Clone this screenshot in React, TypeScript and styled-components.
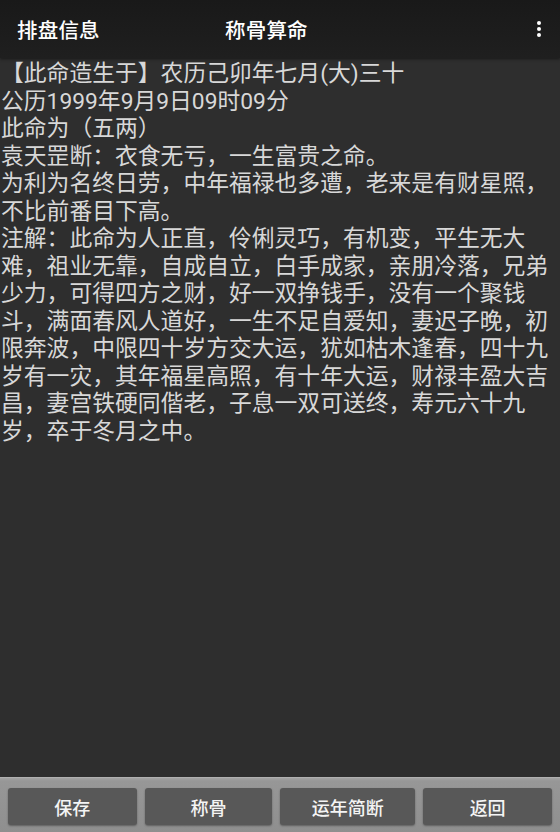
import React from "react";
import styled, { createGlobalStyle } from "styled-components";

const Global = createGlobalStyle`
  html, body { margin: 0; padding: 0; background: #2e2e2e; }
  body { font-family: Roboto, "Noto Sans CJK SC", sans-serif; }
  * { box-sizing: border-box; }
`;

const Screen = styled.div`
  width: 560px;
  height: 832px;
  display: flex;
  flex-direction: column;
  background: #2e2e2e;
  overflow: hidden;
`;

const Header = styled.header`
  height: 58px;
  flex: 0 0 58px;
  display: flex;
  align-items: center;
  padding: 0 17px 0 17px;
  background: linear-gradient(#191919, #1f1f1f);
  color: #ffffff;
  font-family: Roboto, "Noto Sans CJK SC", sans-serif;
  font-size: 20.5px;
  font-weight: 500;
  box-shadow: 0 1px 3px rgba(0, 0, 0, 0.5);
  position: relative;
  z-index: 1;
`;

const LeftTitle = styled.div`
  width: 208px;
  letter-spacing: 0.2px;
`;

const CenterTitle = styled.div`
  flex: 1;
  letter-spacing: 0.2px;
`;

const MenuButton = styled.div`
  width: 24px;
  height: 30px;
  display: flex;
  flex-direction: column;
  align-items: center;
  justify-content: center;
  gap: 2px;
  margin-right: -8px;
`;

const Dot = styled.span`
  width: 4px;
  height: 4px;
  border-radius: 50%;
  background: #ffffff;
`;

const Content = styled.main`
  flex: 1;
  padding: 2px 0 0 1px;
  color: #d8d8d8;
  font-family: Roboto, "Noto Sans CJK SC", sans-serif;
  font-size: 22.8px;
  line-height: 27.5px;
  overflow: hidden;
`;

const Line = styled.div`
  white-space: nowrap;
  height: 27.5px;
`;

const BottomBar = styled.footer`
  flex: 0 0 55px;
  display: grid;
  grid-template-columns: 128fr 127fr 134fr 128fr;
  gap: 8px;
  padding: 10px 8px 7px 8px;
  background: linear-gradient(#a3a3a3 0px, #979797 3px, #8f8f8f 100%);
  border-top: 1px solid #b0b0b0;
`;

const ActionButton = styled.button`
  border: none;
  border-radius: 3px;
  background: #585858;
  color: #f4f4f4;
  font-family: Roboto, "Noto Sans CJK SC", sans-serif;
  font-size: 18px;
  font-weight: 500;
  padding: 0;
  box-shadow: 0 1px 2px rgba(0, 0, 0, 0.35);
  display: flex;
  align-items: center;
  justify-content: center;
`;

const lines = [
  "【此命造生于】农历己卯年七月(大)三十",
  "公历1999年9月9日09时09分",
  "此命为（五两）",
  "袁天罡断：衣食无亏，一生富贵之命。",
  "为利为名终日劳，中年福禄也多遭，老来是有财星照，",
  "不比前番目下高。",
  "注解：此命为人正直，伶俐灵巧，有机变，平生无大",
  "难，祖业无靠，自成自立，白手成家，亲朋冷落，兄弟",
  "少力，可得四方之财，好一双挣钱手，没有一个聚钱",
  "斗，满面春风人道好，一生不足自爱知，妻迟子晚，初",
  "限奔波，中限四十岁方交大运，犹如枯木逢春，四十九",
  "岁有一灾，其年福星高照，有十年大运，财禄丰盈大吉",
  "昌，妻宫铁硬同偕老，子息一双可送终，寿元六十九",
  "岁，卒于冬月之中。",
];

const buttons = ["保存", "称骨", "运年简断", "返回"];

export default function App() {
  return (
    <Screen>
      <Global />
      <Header>
        <LeftTitle>排盘信息</LeftTitle>
        <CenterTitle>称骨算命</CenterTitle>
        <MenuButton>
          <Dot />
          <Dot />
          <Dot />
        </MenuButton>
      </Header>
      <Content>
        {lines.map((l, i) => (
          <Line key={i}>{l}</Line>
        ))}
      </Content>
      <BottomBar>
        {buttons.map((b) => (
          <ActionButton key={b}>{b}</ActionButton>
        ))}
      </BottomBar>
    </Screen>
  );
}
